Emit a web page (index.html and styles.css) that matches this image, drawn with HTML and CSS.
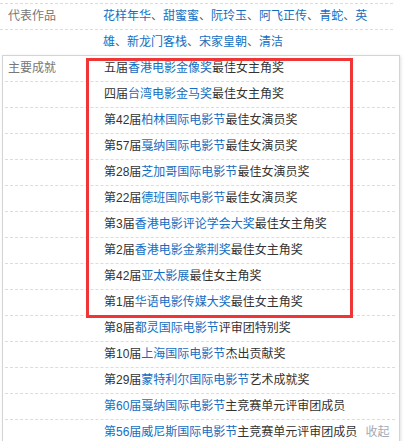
FILE: index.html
```html
<!DOCTYPE html>
<html lang="zh-CN">
<head>
    <meta charset="UTF-8">
    <title>基本信息</title>
    <link rel="stylesheet" href="styles.css">
</head>
<body>

<!--上面的基本信息-->
<div class="basic">
    <div class="row">
        <span class="label">代表作品</span>
        <span class="value"><a href="#">花样年华</a>、<a href="#">甜蜜蜜</a>、<a href="#">阮玲玉</a>、<a href="#">阿飞正传</a>、<a href="#">青蛇</a>、<a href="#">英</a></span>
    </div>
    <div class="row last">
        <span class="label"></span>
        <span class="value"><a href="#">雄</a>、<a href="#">新龙门客栈</a>、<a href="#">宋家皇朝</a>、<a href="#">清洁</a></span>
    </div>
</div>

<!--展开的主要成就-->
<div class="panel">
    <div class="row"><span class="label">主要成就</span><span class="value">五届<a href="#">香港电影金像奖</a>最佳女主角奖</span></div>
    <div class="row"><span class="label"></span><span class="value">四届<a href="#">台湾电影金马奖</a>最佳女主角奖</span></div>
    <div class="row"><span class="label"></span><span class="value">第42届<a href="#">柏林国际电影节</a>最佳女演员奖</span></div>
    <div class="row"><span class="label"></span><span class="value">第57届<a href="#">戛纳国际电影节</a>最佳女演员奖</span></div>
    <div class="row"><span class="label"></span><span class="value">第28届<a href="#">芝加哥国际电影节</a>最佳女演员奖</span></div>
    <div class="row"><span class="label"></span><span class="value">第22届<a href="#">德班国际电影节</a>最佳女演员奖</span></div>
    <div class="row"><span class="label"></span><span class="value">第3届<a href="#">香港电影评论学会大奖</a>最佳女主角奖</span></div>
    <div class="row"><span class="label"></span><span class="value">第2届<a href="#">香港电影金紫荆奖</a>最佳女主角奖</span></div>
    <div class="row"><span class="label"></span><span class="value">第42届<a href="#">亚太影展</a>最佳女主角奖</span></div>
    <div class="row"><span class="label"></span><span class="value">第1届<a href="#">华语电影传媒大奖</a>最佳女主角奖</span></div>
    <div class="row"><span class="label"></span><span class="value">第8届<a href="#">都灵国际电影节</a>评审团特别奖</span></div>
    <div class="row"><span class="label"></span><span class="value">第10届<a href="#">上海国际电影节</a>杰出贡献奖</span></div>
    <div class="row"><span class="label"></span><span class="value">第29届<a href="#">蒙特利尔国际电影节</a>艺术成就奖</span></div>
    <div class="row"><span class="label"></span><span class="value"><a href="#">第60届戛纳国际电影节</a>主竞赛单元评审团成员</span></div>
    <div class="row"><span class="label"></span><span class="value"><a href="#">第56届威尼斯国际电影节</a>主竞赛单元评审团成员<a href="#" class="fold">收起</a></span></div>

    <!--截图上画的红框-->
    <div class="mark"></div>
</div>

</body>
</html>
```

FILE: styles.css
```css
* {
    margin: 0;
    padding: 0
}

body {
    font-family: "Liberation Sans", "Noto Sans CJK SC", sans-serif;
    font-size: 12px;
    color: #333;
    background-color: #fff;
    overflow: hidden;
}

a {
    color: #136ec2;
    text-decoration: none;
}

.row {
    display: flex;
    height: 25px;
    line-height: 25px;
    border-bottom: 1px dashed #dcdcdc;
    white-space: nowrap;
}

.label {
    flex: none;
    color: #777;
}

.value {
    flex: 1;
    color: #333;
}

.basic {
    margin-top: 3px;
    width: 393px;
    border-top: 1px dashed #dcdcdc;
}

.basic .label {
    width: 95px;
    padding-left: 8px;
}

.basic .value {
    color: #666;
}

.basic .row.last {
    border-bottom: none;
}

.panel {
    position: relative;
    margin-left: 2px;
    width: 390px;
    height: 420px;
    padding: 0 4px 0 2px;
    border: 1px solid #d4d4d4;
    background-color: #fff;
    box-shadow: 1px 1px 3px rgba(0, 0, 0, .12);
}

.panel .label {
    width: 96px;
    padding-left: 3px;
}

.fold {
    margin-left: 8px;
    color: #a3abb6;
}

.mark {
    position: absolute;
    left: 83px;
    top: 2px;
    width: 261px;
    height: 254px;
    border: 3px solid #ef3535;
}
```
